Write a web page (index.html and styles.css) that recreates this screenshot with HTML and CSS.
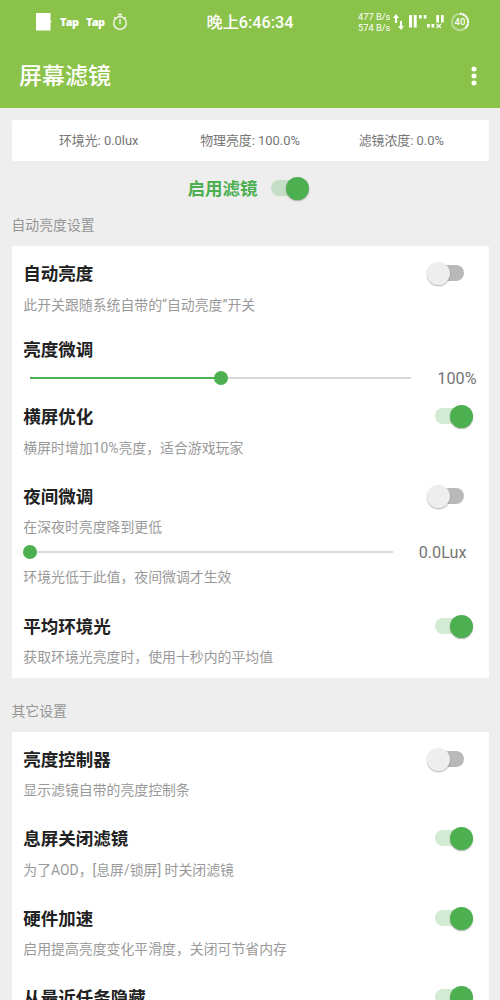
FILE: index.html
```html
<!DOCTYPE html>
<html lang="zh-CN">
<head>
<meta charset="utf-8">
<title>屏幕滤镜</title>
<link rel="stylesheet" href="styles.css">
</head>
<body>
<header class="header">
  <div class="status">
    <div class="status-left">
      <svg class="doc" width="16" height="18" viewBox="0 0 16 18"><path d="M0 0h14.5v7l1 1.5-1 1.5v7.500H0z" fill="#fff"/></svg>
      <span class="tap">Tap</span>
      <span class="tap">Tap</span>
      <svg class="timer" width="16" height="18" viewBox="0 0 16 18" fill="none" stroke="#fff"><circle cx="8" cy="10" r="6.300" stroke-width="1.200"/><path d="M6 1.400h4M8 1.500v2.200M8 6v5M2 4.200l1.300 1.200M14 4.200l-1.300 1.200" stroke-width="1.200"/></svg>
    </div>
    <div class="clock">晚上6:46:34</div>
    <div class="status-right">
      <div class="speed"><span>477 B/s</span><span>574 B/s</span></div>
      <svg class="arrows" width="12" height="18" viewBox="0 0 12 18" fill="#fff"><path d="M3 1l3 4H4.100v5H1.900V5H0zM7 8h2v5h2l-3 4-3-4h2z"/></svg>
      <svg class="signal" width="36" height="18" viewBox="0 0 36 18" fill="#fff"><path d="M0 2h3v12.500H0zM4.700 2h3v12.500h-3zM10 2h2.700v3.500H10zM14.700 2h2.700v3.500h-2.700zM18 11h2.700v3.500H18zM22.500 11h2.700v3.500h-2.700zM27.300 2h2.700v7.500h-2.700zM32 2h2.700v7.500H32z"/><path d="M27.500 11l4.500 4M32 11l-4.500 4" stroke="#fff" stroke-width="1.200"/></svg>
      <div class="battery">
        <svg width="20" height="20" viewBox="0 0 20 20" fill="none" stroke="#fff"><circle cx="10" cy="10" r="8.200" stroke-width="2" opacity=".4"/><path d="M10 1.800A8.200 8.200 0 0 1 14.800 16.600" stroke-width="2" stroke-dasharray="2.200 .6"/></svg>
        <span class="level">40</span>
      </div>
    </div>
  </div>
  <div class="toolbar">
    <h1 class="app-title">屏幕滤镜</h1>
    <svg width="6" height="20" viewBox="0 0 6 20" fill="#fff"><circle cx="3" cy="3" r="2.500"/><circle cx="3" cy="10" r="2.500"/><circle cx="3" cy="17" r="2.500"/></svg>
  </div>
</header>
<main class="content">
  <section class="card stats"><span>环境光: 0.0lux</span><span>物理亮度: 100.0%</span><span>滤镜浓度: 0.0%</span></section>
  <div class="enable"><span>启用滤镜</span><i class="switch on"></i></div>
  <h2 class="section">自动亮度设置</h2>
  <section class="card">
    <div class="row"><div class="line"><h3>自动亮度</h3><i class="switch"></i></div><p>此开关跟随系统自带的“自动亮度”开关</p></div>
    <div class="row tune">
      <div class="line"><h3>亮度微调</h3></div>
      <div class="slider-line"><div class="slider half"><i class="knob"></i></div><span class="value">100%</span></div>
    </div>
    <div class="row"><div class="line"><h3>横屏优化</h3><i class="switch on"></i></div><p>横屏时增加10%亮度，适合游戏玩家</p></div>
    <div class="row night">
      <div class="line"><h3>夜间微调</h3><i class="switch"></i></div><p>在深夜时亮度降到更低</p>
      <div class="slider-line"><div class="slider zero"><i class="knob"></i></div><span class="value">0.0Lux</span></div>
      <p class="note">环境光低于此值，夜间微调才生效</p>
    </div>
    <div class="row"><div class="line"><h3>平均环境光</h3><i class="switch on"></i></div><p>获取环境光亮度时，使用十秒内的平均值</p></div>
  </section>
  <h2 class="section other">其它设置</h2>
  <section class="card">
    <div class="row"><div class="line"><h3>亮度控制器</h3><i class="switch"></i></div><p>显示滤镜自带的亮度控制条</p></div>
    <div class="row"><div class="line"><h3>息屏关闭滤镜</h3><i class="switch on"></i></div><p>为了AOD，[息屏/锁屏] 时关闭滤镜</p></div>
    <div class="row"><div class="line"><h3>硬件加速</h3><i class="switch on"></i></div><p>启用提高亮度变化平滑度，关闭可节省内存</p></div>
    <div class="row"><div class="line"><h3>从最近任务隐藏</h3><i class="switch on"></i></div></div>
  </section>
</main>
</body>
</html>
```
FILE: styles.css
```css
* { box-sizing: border-box; margin: 0; padding: 0; }
body {
  height: 1000px;
  overflow: hidden;
  background: #eee;
  font-family: Roboto, "Noto Sans CJK SC", sans-serif;
  color: #212121;
}
.header { height: 108px; background: #8bc34a; color: #fff; }
.status { display: grid; grid-template-columns: 206.500px 1fr 142px; height: 44px; align-items: center; }
.status-left { display: flex; align-items: center; padding-left: 36px; }
.tap { font: 800 11px/14px "Open Sans", sans-serif; letter-spacing: -.7px; width: 17px; margin-left: 8px; padding-bottom: 1px; }
.tap + .tap { margin-left: 9px; }
.timer { margin-left: 9px; }
.clock { font-size: 16.200px; font-weight: 500; line-height: 24px; padding-top: 1px; white-space: nowrap; }
.status-right { display: flex; align-items: center; }
.speed { display: flex; flex-direction: column; font-size: 9.300px; line-height: 11px; width: 34px; white-space: nowrap; }
.arrows { margin-left: .5px; }
.signal { margin-left: 4px; }
.battery { position: relative; width: 20px; height: 20px; margin-left: 5.500px; }
.battery svg { display: block; }
.level { position: absolute; inset: 0; text-align: center; font-size: 9.500px; font-weight: 500; line-height: 20px; }
.toolbar { display: flex; height: 64px; align-items: center; justify-content: space-between; padding: 0 23px 0 19px; }
.app-title { font-size: 23px; font-weight: 500; line-height: 34px; padding-top: 2px; }
.content { padding: 12px 11.500px 0 11.500px; }
.card { background: #fff; border-radius: 1.500px; }
.stats { display: grid; grid-template-columns: repeat(3, 151.300px); justify-content: center; height: 41px; align-items: center; text-align: center; font-size: 12.900px; color: #757575; padding-bottom: 2px; }
.enable { display: flex; justify-content: center; align-items: center; gap: 13px; height: 54px; padding: 0 13px 1px 0; font-size: 17.500px; font-weight: 700; color: #4caf50; }
.section { height: 31px; font-size: 13.850px; font-weight: 400; line-height: 21px; color: #959595; }
.section.other { height: 53.200px; line-height: 66px; }
.row { height: 79.600px; padding: 15px 25px 0 11.800px; }
.line { display: flex; align-items: center; justify-content: space-between; height: 26px; }
h3 { font-size: 17.500px; font-weight: 700; line-height: 26px; white-space: nowrap; }
.row p { margin-top: 6.700px; font-size: 13.880px; line-height: 22px; color: #999; white-space: nowrap; }
.row.tune { height: 63.400px; padding-top: 11.500px; }
.row.night { height: 130.200px; }
.slider-line { display: flex; align-items: center; height: 29px; padding-left: 6.500px; }
.tune .slider-line { margin-right: -13px; }
.night .slider-line { height: 28px; margin: -.5px -3px 0 0; }
.slider { width: 381.500px; height: 2px; display: flex; align-items: center; background: #d9d9d9; }
.slider.zero { width: 363.500px; }
.slider.half { background: linear-gradient(90deg, #4caf50 50%, #d9d9d9 50%); }
.knob { width: 14px; height: 14px; border-radius: 50%; background: #4caf50; flex: none; margin-left: -7px; }
.half .knob { margin-left: calc(50% - 7px); }
.value { flex: 1; text-align: right; font-size: 16.200px; color: #757575; line-height: 20px; padding-top: 2px; }
.row .note { margin-top: 0; }
/* Track is 29px wide; the thumb overhangs it on either side. */
.switch { position: relative; width: 29px; height: 16px; border-radius: 8px; background: #b9b9b9; flex: none; }
.line .switch { margin-bottom: 2px; }
.switch::after { content: ""; position: absolute; left: -8px; top: -3px; width: 23px; height: 23px; border-radius: 50%; background: #eee; box-shadow: 0 1px 1.500px rgba(0,0,0,.3); }
.switch.on { background: rgba(76,175,80,.25); }
.switch.on::after { left: 15px; background: #4caf50; }
```
